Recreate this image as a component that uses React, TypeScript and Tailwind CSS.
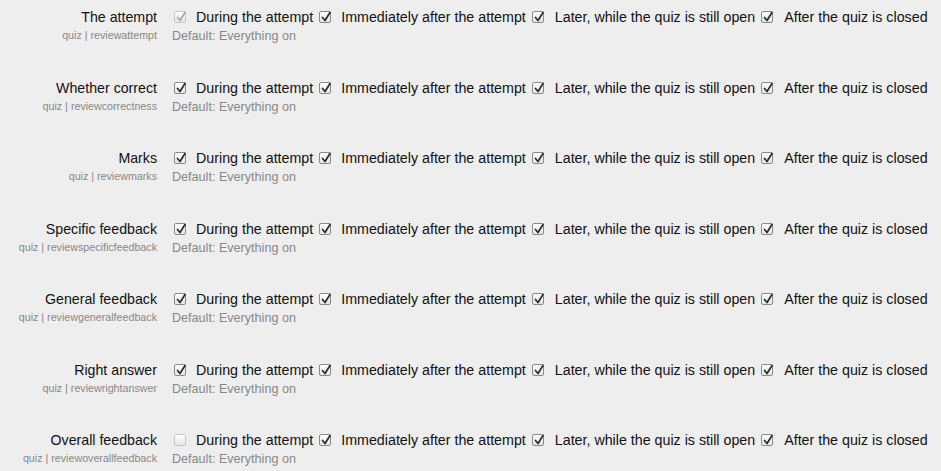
import React from "react";

type Row = {
  label: string;
  name: string;
  first: "on" | "disabled" | "off";
};

const rows: Row[] = [
  { label: "The attempt", name: "reviewattempt", first: "disabled" },
  { label: "Whether correct", name: "reviewcorrectness", first: "on" },
  { label: "Marks", name: "reviewmarks", first: "on" },
  { label: "Specific feedback", name: "reviewspecificfeedback", first: "on" },
  { label: "General feedback", name: "reviewgeneralfeedback", first: "on" },
  { label: "Right answer", name: "reviewrightanswer", first: "on" },
  { label: "Overall feedback", name: "reviewoverallfeedback", first: "off" },
];

const font = { fontFamily: '"Liberation Sans", Arial, Helvetica, sans-serif' };

const Box: React.FC<{ state: "on" | "disabled" | "off" }> = ({ state }) => {
  const faded = state !== "on";
  return (
    <span
      className={`relative inline-block w-[12px] h-[12px] shrink-0 rounded-[2px] border bg-gradient-to-b from-white to-[#e6e6e6] ${
        faded ? "border-[#c8c8c8]" : "border-[#8a8a8a]"
      }`}
    >
      {state !== "off" && (
        <svg
          className="absolute -left-[1px] -top-[2px]"
          width="14"
          height="14"
          viewBox="0 0 14 14"
          fill="none"
        >
          <path
            d="M3.5 7.5 L6 10.5 L11 2.5"
            stroke={state === "on" ? "#2b2b2b" : "#a8a8a8"}
            strokeWidth="1.7"
            strokeLinecap="round"
            strokeLinejoin="round"
          />
        </svg>
      )}
    </span>
  );
};

const Option: React.FC<{ text: string }> = ({ text }) => (
  <span className="text-[14.25px] leading-[18px] text-[#111] whitespace-nowrap">{text}</span>
);

export default function App() {
  return (
    <div className="w-[941px] h-[471px] bg-[#eeeeee] overflow-hidden pt-[8px]" style={font}>
      {rows.map((r) => (
        <div key={r.name} className="flex h-[70.5px]">
          <div className="w-[157px] shrink-0 flex flex-col items-end">
            <span className="text-[14.2px] leading-[18px] text-[#111] whitespace-nowrap">{r.label}</span>
            <span className="text-[10.7px] leading-[12px] text-[#888] mt-[3px] whitespace-nowrap">
              quiz | {r.name}
            </span>
          </div>
          <div className="ml-[17px] flex flex-col">
            <div className="flex items-center h-[18px]">
              <Box state={r.first} />
              <span className="ml-[10px]">
                <Option text="During the attempt" />
              </span>
              <span className="ml-[6px] flex"><Box state="on" /></span>
              <span className="ml-[10px]">
                <Option text="Immediately after the attempt" />
              </span>
              <span className="ml-[6px] flex"><Box state="on" /></span>
              <span className="ml-[11px]">
                <Option text="Later, while the quiz is still open" />
              </span>
              <span className="ml-[6px] flex"><Box state="on" /></span>
              <span className="ml-[11px]">
                <Option text="After the quiz is closed" />
              </span>
            </div>
            <span className="-ml-[2px] mt-[3px] text-[12.6px] leading-[14px] text-[#888] whitespace-nowrap">
              Default: Everything on
            </span>
          </div>
        </div>
      ))}
    </div>
  );
}
